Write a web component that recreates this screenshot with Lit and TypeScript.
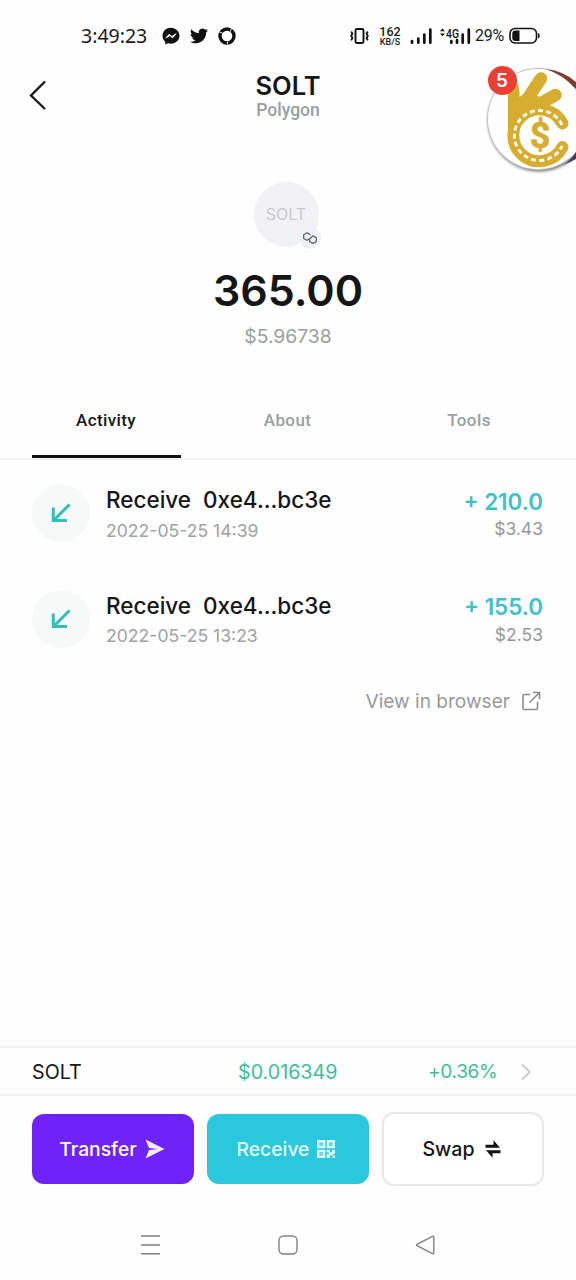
import { LitElement, html, css } from "lit";
import { customElement } from "lit/decorators.js";

interface Transfer {
  address: string;
  time: string;
  amount: string;
  value: string;
}

const transfers: Transfer[] = [
  { address: "0xe4...bc3e", time: "2022-05-25 14:39", amount: "+ 210.0", value: "$3.43" },
  { address: "0xe4...bc3e", time: "2022-05-25 13:23", amount: "+ 155.0", value: "$2.53" },
];

@customElement("status-bar")
class StatusBar extends LitElement {
  static styles = css`
    :host { display: flex; height: 60px; padding: 0 36px 0 81px; box-sizing: border-box; align-items: center; color: #1a1a1a; }
    .left, .right { display: flex; align-items: center; height: 24px; margin-top: 12px; }
    .left { flex: 1; }
    .time { font: 400 19.5px/24px "Noto Sans", sans-serif; width: 81px; white-space: nowrap; }
    .glyph { margin-right: 10px; }
    .rate { display: flex; flex-direction: column; align-items: center; width: 24px; margin: 0 8px 0 9px; white-space: nowrap; font-family: Roboto, sans-serif; }
    .num { font-size: 12.5px; font-weight: 500; line-height: 11px; }
    .kb { font-size: 9px; font-weight: 500; line-height: 10px; }
    .cell { margin-right: 7px; }
    .pct { font: 400 16px/20px Roboto, sans-serif; width: 29px; margin: 0 5px 0 4px; letter-spacing: -0.2px; white-space: nowrap; }
    svg { display: block; flex: none; }
  `;
  render() {
    return html`
      <div class="left">
        <span class="time">3:49:23</span>
        <svg class="glyph" width="18" height="18" viewBox="0 0 18 18"><path d="M9 .7C4.200.7.5 4.200.5 8.800c0 2.400 1 4.500 2.700 6V17.600l2.700-1.300c1 .3 2 .4 3.100.4 4.800 0 8.500-3.500 8.500-7.900S13.800.7 9 .7z" fill="#111"/><path d="M3.800 11l3.400-3.700 2.600 2.200 4.300-2.700-3.500 4-2.700-2.200z" fill="#fff" stroke="#fff" stroke-width=".9"/></svg>
        <svg class="glyph" width="18" height="18" viewBox="0 0 24 24"><path fill="#111" d="M23.950 4.570a10 10 0 0 1-2.820.77 4.960 4.960 0 0 0 2.160-2.720c-.95.55-2 .95-3.130 1.180a4.920 4.920 0 0 0-8.380 4.480C7.690 8.090 4.070 6.130 1.640 3.160a4.820 4.820 0 0 0-.67 2.480c0 1.710.87 3.210 2.190 4.100a4.900 4.900 0 0 1-2.230-.62v.06a4.920 4.920 0 0 0 3.950 4.830 5 5 0 0 1-2.210.08 4.940 4.940 0 0 0 4.600 3.420A9.870 9.870 0 0 1 0 19.540a14 14 0 0 0 7.550 2.210c9.050 0 14-7.500 14-13.980 0-.21 0-.42-.02-.63a9.940 9.940 0 0 0 2.460-2.550z"/></svg>
        <svg width="18" height="18" viewBox="0 0 18 18"><circle cx="9" cy="9" r="7" fill="none" stroke="#111" stroke-width="3.400"/><path d="M1 4.800l3.800 1.600M13.500 1.300l-1.300 3.500M9.500 14.500v3" stroke="#fff" stroke-width=".9"/></svg>
      </div>
      <div class="right">
        <svg width="19" height="18" viewBox="0 0 19 18"><rect x="5.500" y="2" width="8" height="14" rx="1.500" fill="none" stroke="#111" stroke-width="1.900"/><path d="M1.200 4.500l1.200 2-1.200 2.300 1.200 2.200-1.200 2.300M17.800 4.500l-1.200 2 1.200 2.300-1.200 2.200 1.200 2.300" fill="none" stroke="#111" stroke-width="1.800"/></svg>
        <div class="rate"><div class="num">162</div><div class="kb">KB/S</div></div>
        <svg class="cell" width="22" height="18" viewBox="0 0 22 18"><path d="M2 14v1.700M8.300 11.500v4.200M14.300 7.500v8.200M20.300 2.500v13.200" stroke="#111" stroke-width="2.700" stroke-linecap="round"/></svg>
        <svg width="32" height="18" viewBox="0 0 32 18"><path d="M1 4.300L3.500 1.500 6 4.300zM1 6.500L3.500 9.300 6 6.500z" fill="#111"/><text x="7" y="10.500" font-family="Roboto, sans-serif" font-weight="500" font-size="12" textLength="13" lengthAdjust="spacingAndGlyphs" fill="#111">4G</text><path d="M12.300 14v1.700M18 13v2.700M23.700 7.500v8.200M29.800 2.500v13.200" stroke="#111" stroke-width="2.700" stroke-linecap="round"/></svg>
        <span class="pct">29%</span>
        <svg width="31" height="18" viewBox="0 0 31 18"><rect x="1" y="1.500" width="26.500" height="14.500" rx="5" fill="none" stroke="#111" stroke-width="1.600"/><path d="M10.500 3.500v10.500H6.500a3.200 3.200 0 0 1-3.200-3.200V6.700a3.200 3.200 0 0 1 3.200-3.200z" fill="#111"/><path d="M29.300 6.500q1.200 2.300 0 4.500" fill="none" stroke="#111" stroke-width="1.500"/></svg>
      </div>`;
  }
}

@customElement("floating-bubble")
class FloatingBubble extends LitElement {
  static styles = css`
    :host { display: block; position: absolute; top: 60px; right: 0; width: 96px; height: 120px; overflow: hidden; }
    .art { display: block; }
    .badge { position: absolute; left: 7.500px; top: 6px; width: 29px; height: 29px; border-radius: 50%; background: #e93f35; color: #fff; text-align: center; font: 600 19px/29px Inter, sans-serif; }
  `;
  render() {
    return html`
      <svg class="art" width="96" height="120" viewBox="480 60 96 120">
        <defs><filter id="s" x="-20%" y="-20%" width="140%" height="140%"><feGaussianBlur stdDeviation="1.500"/></filter></defs>
        <circle cx="539" cy="120.500" r="51" fill="#555" opacity=".8" filter="url(#s)"/>
        <circle cx="538" cy="119" r="51" fill="#c4c4c8"/>
        <circle cx="538" cy="119" r="50" fill="#fff"/>
        <path d="M546 69.300Q566 71 580 86V94Q565 75 546 69.300z" fill="#7b3d32"/>
        <path d="M576 152v7l-12 6q8-6 12-13z" fill="#443b57"/>
        <path d="M508 136V76Q519 78 519.500 92V97L526 92 549 100 545 109 526 115 514 136z" fill="#d7ad2f"/>
        <path d="M526 101L541 78.500M534 107L555.500 95" stroke="#d7ad2f" stroke-width="12.500" stroke-linecap="round"/>
        <path d="M562.500 123.500A26 26 0 1 0 562.500 147" fill="none" stroke="#d7ad2f" stroke-width="12" stroke-linecap="round"/>
        <path d="M562 125A25 25 0 1 0 562 146" fill="none" stroke="#fff" stroke-width="2.800" stroke-dasharray="5 3.200"/>
        <text x="540" y="147.500" text-anchor="middle" font-family="Roboto, sans-serif" font-weight="700" font-size="36" fill="#d7ad2f" stroke="#d7ad2f" stroke-width=".6">$</text>
      </svg>
      <span class="badge">5</span>`;
  }
}

@customElement("app-root")
class AppRoot extends LitElement {
  static styles = css`
    :host { display: flex; flex-direction: column; position: relative; width: 576px; height: 1280px; overflow: hidden; background: #fefefe; color: #161616; font-family: Inter, sans-serif; }
    * { box-sizing: border-box; }
    svg { display: block; flex: none; }
    span, .line { white-space: nowrap; }
    .header { display: grid; grid-template-columns: 96px 1fr 96px; height: 70px; align-items: start; }
    .back { padding: 19px 0 0 28px; }
    .title { text-align: center; padding-top: 11px; }
    .name { font-size: 25.500px; font-weight: 600; line-height: 30px; }
    .chain { font: 500 17.500px/20px Roboto, sans-serif; color: #94a19e; margin-top: -1px; }
    .summary { display: flex; flex-direction: column; align-items: center; height: 254px; padding-top: 52px; }
    .token { position: relative; width: 65px; height: 65px; border-radius: 50%; background: #f2f2f6; color: #c9c9cd; font-size: 16px; line-height: 65px; text-align: center; margin-right: 4px; }
    .net { position: absolute; left: 45px; top: 45px; width: 22px; height: 22px; border-radius: 50%; background: #eef1f6; }
    .balance { font-size: 43px; font-weight: 600; line-height: 52px; margin-top: 17px; }
    .fiat { font-size: 19.300px; line-height: 24px; color: #9a9f9f; margin-top: 8px; }
    .tabs { display: grid; grid-template-columns: 149px 1fr 149px; height: 76px; padding: 0 32px; border-bottom: 2px solid #f3f3f4; }
    .tab { display: flex; justify-content: center; font: 500 17px/20px Roboto, sans-serif; letter-spacing: .4px; color: #9a9fa1; padding: 26px 1px 0 0; }
    .on { color: #161616; border-bottom: 3px solid #111; height: 74px; }
    .list { padding-top: 24px; height: 225px; }
    .row { display: flex; align-items: flex-start; height: 105.500px; padding: 0 33px 0 32px; }
    .disc { width: 58px; height: 58px; border-radius: 50%; background: #f7f8f8; display: flex; align-items: center; justify-content: center; margin-right: 16px; }
    .info { flex: 1; }
    .what { display: flex; gap: 12px; font-size: 22.500px; font-weight: 500; line-height: 28px; margin-top: 2px; }
    .when { font-size: 17.600px; line-height: 22px; color: #a0a2a3; margin-top: 5.500px; }
    .sums { text-align: right; }
    .amount { font-size: 22.400px; font-weight: 600; line-height: 28px; color: #3fc1c6; margin-top: 3.500px; }
    .value { font-size: 17.500px; line-height: 22px; color: #97999a; margin-top: 2.500px; }
    .browse { display: flex; justify-content: flex-end; align-items: center; gap: 11px; padding: 0 35px 1px 0; height: 32px; color: #97999b; font-size: 19.100px; }
    .space { flex: 1; }
    .price { display: grid; grid-template-columns: 206px 190px 1fr 12px; height: 50px; padding: 2px 44px 0 32px; border-top: 2px solid #f1f1f2; border-bottom: 2px solid #f1f1f2; align-items: center; font-size: 19.700px; line-height: 24px; }
    .up { color: #40bd9c; }
    .rise { font-size: 19px; letter-spacing: -.3px; }
    .actions { display: grid; grid-template-columns: 162px 162px 162px; gap: 13px; padding: 18px 32px 0; height: 108px; }
    .btn { display: flex; align-items: center; justify-content: center; gap: 8px; height: 70px; border-radius: 12px; font-size: 19.300px; font-weight: 500; color: #fff; padding-right: 2px; }
    .send { background: #6f22f6; }
    .recv { background: #2bc8dd; color: #e4fbfd; padding-right: 4px; }
    .swap { background: #fff; color: #161616; border: 2px solid #e8e8ea; height: 74px; margin-top: -2px; font-size: 19.600px; gap: 9px; }
    .nav { display: flex; justify-content: space-between; padding: 30px 140px 0; height: 76px; }
  `;

  private row(t: Transfer) {
    return html`<div class="row">
      <div class="disc">
        <svg width="20" height="20" viewBox="0 0 20 20"><path d="M18.500 1.500L3 17M2.300 4.500V17.500H16" fill="none" stroke="#35bdb8" stroke-width="3"/></svg>
      </div>
      <div class="info">
        <div class="what"><span>Receive</span><span>${t.address}</span></div>
        <div class="when line">${t.time}</div>
      </div>
      <div class="sums"><div class="amount line">${t.amount}</div><div class="value">${t.value}</div></div>
    </div>`;
  }

  render() {
    return html`
      <status-bar></status-bar>
      <div class="header">
        <div class="back"><svg width="20" height="32" viewBox="0 0 20 32"><path d="M17 2.500L3 16.500l14 13.500" fill="none" stroke="#161616" stroke-width="2.300"/></svg></div>
        <div class="title"><div class="name">SOLT</div><div class="chain">Polygon</div></div>
      </div>
      <div class="summary">
        <div class="token">SOLT
          <div class="net"><svg width="22" height="22" viewBox="0 0 22 22"><path d="M11 8.300V7.500L8 5.800 4.700 7.700v3.800L8 13.300l3-1.700 3-2.700 3.300 1.900v3.800L14 16.500l-3.300-1.900v-1.800" fill="none" stroke="#5b6270" stroke-width="1.300" stroke-linejoin="round"/></svg></div>
        </div>
        <div class="balance">365.00</div>
        <div class="fiat">$5.96738</div>
      </div>
      <div class="tabs"><div class="tab on">Activity</div><div class="tab">About</div><div class="tab">Tools</div></div>
      <div class="list">${transfers.map((t) => this.row(t))}</div>
      <div class="browse"><span>View in browser</span>
        <svg width="20" height="20" viewBox="0 0 20 20"><path d="M9 3.500H3.500Q2 3.500 2 5V17Q2 18.500 3.500 18.500H15Q16.500 18.500 16.500 17V11M12 1.500H18.500V8M18 2L8.500 11.500" fill="none" stroke="#8b8d8f" stroke-width="1.600"/></svg>
      </div>
      <div class="space"></div>
      <div class="price"><span>SOLT</span><span class="up">$0.016349</span><span class="up rise">+0.36%</span>
        <svg width="12" height="18" viewBox="0 0 12 18"><path d="M2 1.500l8 7.500L2 16.500" fill="none" stroke="#c9c9cb" stroke-width="1.800"/></svg>
      </div>
      <div class="actions">
        <div class="btn send"><span>Transfer</span><svg width="20" height="20" viewBox="0 0 20 20"><path d="M.5.5L19.500 10 .5 19.500 4 11 13 10 4 9z" fill="#f5ecff"/></svg></div>
        <div class="btn recv"><span>Receive</span><svg width="18" height="18" viewBox="0 0 18 18"><path fill="#dcfafc" fill-rule="evenodd" d="M0 0h8.300v8.300H0zM2.500 2.500v3.300h3.300V2.500zM9.700 0h8.300v8.300H9.700zM12.200 2.500v3.300h3.300V2.500zM0 9.700h8.300v8.300H0zM2.500 12.200v3.300h3.300v-3.300zM9.700 9.700h3.300v2.500h2V9.700h3v4.300h-2v1.500h-3v2.500H9.700v-4h2v-1.500h-2zM15.500 15.500H18V18h-2.500z"/><path fill="#dcfafc" d="M3.500 3.500h1.300v1.300H3.500zM13.200 3.500h1.300v1.300h-1.300zM3.500 13.200h1.300v1.300H3.500z"/></svg></div>
        <div class="btn swap"><span>Swap</span><svg width="18" height="18" viewBox="0 0 18 18"><path d="M1.500 4.800H9.500V.3L16 7.700H1.500zM16.500 13.200H8.500V17.700L2 10.300H16.500z" fill="#111"/></svg></div>
      </div>
      <div class="nav">
        <svg width="21" height="22" viewBox="0 0 21 22"><path d="M1 2H20M1 11H20M1 19.700H20" stroke="#808080" stroke-width="1.400"/></svg>
        <svg width="22" height="22" viewBox="0 0 22 22"><rect x="2" y="2" width="18" height="18" rx="4.500" fill="none" stroke="#808080" stroke-width="1.400"/></svg>
        <svg width="21" height="22" viewBox="0 0 21 22"><path d="M17.500 2.300L2 10.300q-1 .7 0 1.400L17.500 19.700q1.300.4 1.300-1V3.300q0-1.400-1.300-1z" fill="none" stroke="#808080" stroke-width="1.400"/></svg>
      </div>
      <floating-bubble></floating-bubble>`;
  }
}
